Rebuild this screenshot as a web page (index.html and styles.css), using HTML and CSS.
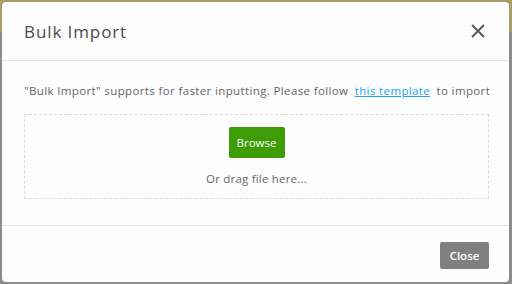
FILE: index.html
```html
<!DOCTYPE html>
<html lang="en">
<head>
  <meta charset="UTF-8">
  <title>Bulk Import</title>
  <link rel="stylesheet" href="styles.css">
</head>
<body>
  <div class="modal">
    <div class="modal-header">
      <h2 class="modal-title">Bulk Import</h2>
      <button class="close-x" aria-label="Close">
        <svg width="14" height="14" viewBox="0 0 14 14">
          <path d="M1 1 L13 13 M13 1 L1 13" stroke="#555" stroke-width="1.8" fill="none"/>
        </svg>
      </button>
    </div>

    <div class="modal-body">
      <p class="hint">"Bulk Import" supports for faster inputting. Please follow <a href="#" class="template-link">this template</a> to import</p>
      <div class="drop-zone">
        <button class="browse-button">Browse</button>
        <p class="drop-text">Or drag file here...</p>
      </div>
    </div>

    <div class="modal-footer">
      <button class="close-button">Close</button>
    </div>
  </div>
</body>
</html>
```

FILE: styles.css
```css
html, body {
  margin: 0;
  height: 100%;
}

body {
  background: linear-gradient(#a89c68 0, #a89c68 32px, #8c8c8c 32px);
  font-family: "Open Sans", "Lato", sans-serif;
  padding: 2px 3px 2px 2px;
  box-sizing: border-box;
}

.modal {
  background-color: #fdfdfd;
  border-radius: 4px;
  height: 280px;
  display: flex;
  flex-direction: column;
}

.modal-header {
  height: 58px;
  padding: 0 24px 0 22px;
  display: flex;
  align-items: center;
  justify-content: space-between;
  border-bottom: 1px solid #e6e6e6;
}

.modal-title {
  margin: 0;
  font-size: 17px;
  font-weight: 500;
  color: #4d4d4d;
  letter-spacing: 0.9px;
}

.close-x {
  background: none;
  border: none;
  padding: 0;
  width: 14px;
  height: 14px;
  cursor: pointer;
}

.modal-body {
  padding: 22px 20px 24px 22px;
  flex: 1;
}

.hint {
  margin: 0 0 16px 0;
  font-size: 11.5px;
  letter-spacing: 0.37px;
  color: #666;
  white-space: nowrap;
}

.template-link {
  color: #1aa7ea;
  margin: 0 3px;
}

.drop-zone {
  border: 1px dashed #dcdcdc;
  height: 71px;
  display: flex;
  flex-direction: column;
  align-items: center;
  padding-top: 12px;
  box-sizing: content-box;
}

.browse-button {
  background-color: #3e9c06;
  color: #fff;
  border: none;
  border-radius: 2px;
  width: 56px;
  height: 31px;
  font-family: inherit;
  font-size: 11.5px;
  cursor: pointer;
}

.drop-text {
  margin: 13px 0 0 0;
  font-size: 11.5px;
  color: #666;
  letter-spacing: 0.2px;
}

.modal-footer {
  border-top: 1px solid #e6e6e6;
  height: 57px;
  display: flex;
  justify-content: flex-end;
  align-items: flex-start;
  padding: 16px 20px 0 0;
  box-sizing: border-box;
}

.close-button {
  background-color: #808080;
  color: #fff;
  border: none;
  border-radius: 2px;
  width: 49px;
  height: 27px;
  font-family: inherit;
  font-size: 11.5px;
  font-weight: 600;
  cursor: pointer;
}
```
